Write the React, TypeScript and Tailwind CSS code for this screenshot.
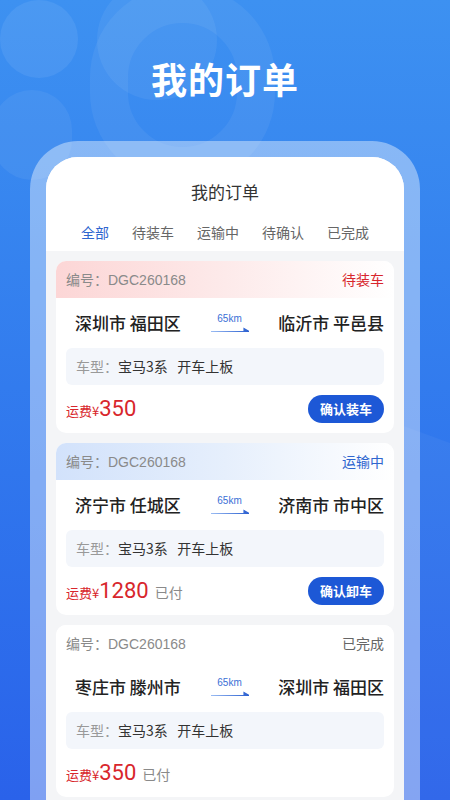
import React from "react";

const FONT = { fontFamily: '"Noto Sans CJK SC", "Noto Sans", sans-serif' };

type Order = {
  from: string;
  to: string;
  status: string;
  kind: "load" | "transit" | "done";
  price: string;
  paid: boolean;
  button?: string;
};

const orders: Order[] = [
  { from: "深圳市 福田区", to: "临沂市 平邑县", status: "待装车", kind: "load", price: "350", paid: false, button: "确认装车" },
  { from: "济宁市 任城区", to: "济南市 市中区", status: "运输中", kind: "transit", price: "1280", paid: true, button: "确认卸车" },
  { from: "枣庄市 滕州市", to: "深圳市 福田区", status: "已完成", kind: "done", price: "350", paid: true },
];

function Arrow() {
  return (
    <div className="flex w-[38px] flex-col items-center">
      <span className="text-[10px] leading-[12px] text-[#3a6fd6]" style={{ fontFamily: '"Liberation Sans", sans-serif' }}>
        65km
      </span>
      <svg width="38" height="6" viewBox="0 0 38 6" className="mt-[2px]">
        <defs>
          <linearGradient id="ag" x1="0" x2="1" y1="0" y2="0">
            <stop offset="0" stopColor="#9bbcf3" />
            <stop offset="1" stopColor="#2a5fd0" />
          </linearGradient>
        </defs>
        <path d="M0 4.5 H38 L33 1.5 V4.5" fill="url(#ag)" stroke="url(#ag)" strokeWidth="1.2" />
      </svg>
    </div>
  );
}

function Card({ o }: { o: Order }) {
  const band =
    o.kind === "load"
      ? "bg-gradient-to-r from-[#fcd6d6] via-[#fdeaea] to-white"
      : o.kind === "transit"
      ? "bg-gradient-to-r from-[#d2e2fb] via-[#e6effc] to-white"
      : "bg-white";
  const statusColor =
    o.kind === "load" ? "text-[#d8262c]" : o.kind === "transit" ? "text-[#2f66cf]" : "text-[#666666]";
  return (
    <div className="overflow-hidden rounded-[10px] bg-white">
      <div className={`flex h-[37px] items-center justify-between px-[10px] ${band}`}>
        <span className="text-[14px] text-[#8a8a8a]">
          编号：<span style={{ fontFamily: '"Liberation Sans", sans-serif' }}>DGC260168</span>
        </span>
        <span className={`text-[14px] ${statusColor}`}>{o.status}</span>
      </div>
      <div className="flex h-[50px] items-center justify-between pl-[19px] pr-[10px]">
        <span className="text-[17px] font-medium text-[#222222]">{o.from}</span>
        <Arrow />
        <span className="text-[17px] font-medium text-[#222222]">{o.to}</span>
      </div>
      <div className="mx-[10px] flex h-[37px] items-center rounded-[6px] bg-[#f3f6fb] pl-[10px] text-[14px]">
        <span className="text-[#999999]">车型：</span>
        <span className="text-[#333333]">宝马3系&nbsp;&nbsp;&nbsp;开车上板</span>
      </div>
      <div className="flex h-[48px] items-center justify-between px-[10px]">
        <div className="flex items-baseline">
          <span className="text-[13px] text-[#d8262c]">运费¥</span>
          <span
            className="text-[22px] font-normal leading-none text-[#d8262c]"
            style={{ fontFamily: 'Roboto, "Liberation Sans", sans-serif' }}
          >
            {o.price}
          </span>
          {o.paid && <span className="ml-[6px] text-[14px] text-[#8a8a8a]">已付</span>}
        </div>
        {o.button && (
          <div className="flex h-[28px] w-[76px] items-center justify-center rounded-full bg-[#1d58d6] text-[13px] font-bold text-white">
            {o.button}
          </div>
        )}
      </div>
    </div>
  );
}

export default function App() {
  const tabs = ["全部", "待装车", "运输中", "待确认", "已完成"];
  return (
    <div
      className="relative h-[800px] w-[450px] overflow-hidden bg-gradient-to-b from-[#3d91f1] to-[#2a62ea]"
      style={FONT}
    >
      {/* decorative shapes */}
      <div className="absolute left-0 top-0 h-[78px] w-[78px] rounded-full bg-white/[0.07]" />
      <div className="absolute left-[-8px] top-[90px] h-[90px] w-[80px] rounded-full bg-white/[0.06]" />
      <div className="absolute left-[97px] top-[-20px] h-[120px] w-[120px] rounded-full bg-white/[0.06]" />
      <div className="absolute left-[90px] top-[-15px] h-[200px] w-[185px] rounded-full border-[38px] border-white/[0.06]" />
      <div className="absolute right-[-220px] bottom-[-80px] h-[420px] w-[420px] rotate-[20deg] rounded-[60px] bg-white/[0.04]" />

      <div className="relative flex flex-col items-center">
        <h1 className="mt-[56px] text-[36px] font-bold leading-[44px] tracking-[1px] text-white">我的订单</h1>

        <div className="mt-[41px] w-[390px] rounded-t-[48px] bg-white/40 px-[16px] pt-[16px]">
          <div className="h-[700px] overflow-hidden rounded-t-[32px] bg-[#f4f5f7]">
            <div className="bg-white pb-[9px] pt-[22px]">
              <div className="text-center text-[17px] leading-[26px] text-[#333333]">我的订单</div>
              <div className="mt-[17px] flex justify-center gap-[23px] text-[14px] leading-[20px]">
                {tabs.map((t, i) => (
                  <span key={t} className={i === 0 ? "text-[#2f66cf]" : "text-[#666666]"}>
                    {t}
                  </span>
                ))}
              </div>
            </div>
            <div className="flex flex-col gap-[10px] px-[10px] pt-[10px]">
              {orders.map((o, i) => (
                <Card key={i} o={o} />
              ))}
            </div>
          </div>
        </div>
      </div>
    </div>
  );
}
